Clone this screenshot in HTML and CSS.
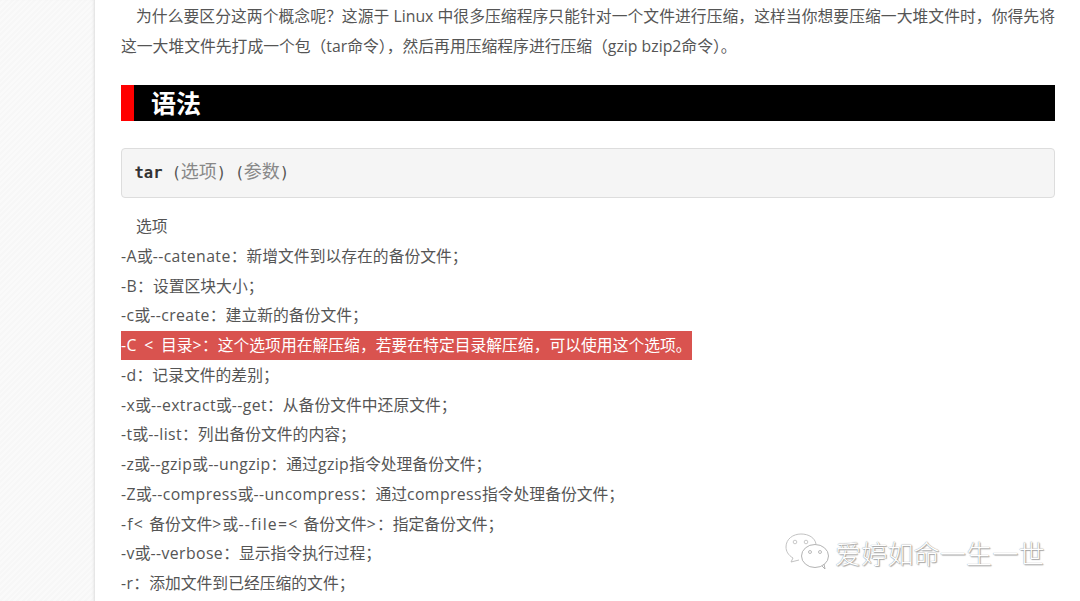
FILE: index.html
```html
<!DOCTYPE html>
<html lang="zh-CN">
<head>
<meta charset="utf-8">
<title>tar</title>
<link rel="stylesheet" href="styles.css">
</head>
<body>
<div class="page">
  <aside class="gutter"></aside>
  <main class="article">
    <p class="intro">为什么要区分这两个概念呢？这源于 Linux 中很多压缩程序只能针对一个文件进行压缩，这样当你想要压缩一大堆文件时，你得先将这一大堆文件先打成一个包（tar命令），然后再用压缩程序进行压缩（gzip bzip2命令）。</p>
    <h2 class="heading">语法</h2>
    <pre class="code"><b>tar</b> <span class="dim-p">(</span><span class="dim">选项</span><span class="dim-p">)</span> <span class="dim-p">(</span><span class="dim">参数</span><span class="dim-p">)</span></pre>
    <div class="options">
      <div class="opt-title">选项</div>
      <div><span class="en">-A</span>或<span class="en">--catenate</span>：新增文件到以存在的备份文件；</div>
      <div><span class="en">-B</span>：设置区块大小；</div>
      <div><span class="en">-c</span>或<span class="en">--create</span>：建立新的备份文件；</div>
      <div><span class="mark wide"><span class="en">-C &lt;</span> 目录<span class="en">&gt;</span>：这个选项用在解压缩，若要在特定目录解压缩，可以使用这个选项。</span></div>
      <div><span class="en">-d</span>：记录文件的差别；</div>
      <div><span class="en">-x</span>或<span class="en">--extract</span>或<span class="en">--get</span>：从备份文件中还原文件；</div>
      <div><span class="en">-t</span>或<span class="en">--list</span>：列出备份文件的内容；</div>
      <div><span class="en">-z</span>或<span class="en">--gzip</span>或<span class="en">--ungzip</span>：通过<span class="en">gzip</span>指令处理备份文件；</div>
      <div><span class="en">-Z</span>或<span class="en">--compress</span>或<span class="en">--uncompress</span>：通过<span class="en">compress</span>指令处理备份文件；</div>
      <div class="file-row"><span class="en">-f&lt;</span> 备份文件<span class="en">&gt;</span>或<span class="en">--file=&lt;</span> 备份文件<span class="en">&gt;</span>：指定备份文件；</div>
      <div><span class="en">-v</span>或<span class="en">--verbose</span>：显示指令执行过程；</div>
      <div><span class="en">-r</span>：添加文件到已经压缩的文件；</div>
    </div>
  </main>
</div>
<div class="watermark">
  <svg class="wm-icon" width="44" height="38" viewBox="0 0 44 38" fill="none">
    <path d="M8 25 C3 22 1 18 1 14 C1 6 8 1 16 1 C24 1 30 5 31 11" stroke="#bbb" stroke-width="0.9"/>
    <path d="M8 25 L6 29 L14 27" stroke="#bbb" stroke-width="0.9"/>
    <ellipse cx="30" cy="23" rx="13.5" ry="11.5" fill="#fff" stroke="#aaa" stroke-width="0.9"/>
    <path d="M37 33 L40 36 L39 31" stroke="#aaa" stroke-width="0.9"/>
    <circle cx="10" cy="9" r="1.8" stroke="#bbb" stroke-width="0.8"/>
    <circle cx="21" cy="9" r="1.8" stroke="#bbb" stroke-width="0.8"/>
    <circle cx="25" cy="19" r="1.5" stroke="#aaa" stroke-width="0.8"/>
    <circle cx="35" cy="19" r="1.5" stroke="#aaa" stroke-width="0.8"/>
  </svg>
  <span class="wm-text">爱婷如命一生一世</span>
</div>
</body>
</html>
```
FILE: styles.css
```css
* { box-sizing: border-box; }
html, body { margin: 0; padding: 0; height: 601px; overflow: hidden; background: #fff; }
body {
  font-family: "Open Sans", "Noto Sans CJK SC", sans-serif;
  font-size: 15.8px;
  color: #555;
}
.page { display: flex; height: 601px; }
.gutter {
  width: 95px;
  flex: none;
  background: repeating-linear-gradient(135deg, #f7f7f7 0 2px, #fafafa 2px 4px);
  box-shadow: inset -3px 0 3px -2px #ddd;
}
.article { flex: 1; padding: 1px 25px 0 26px; min-width: 0; }
.intro {
  margin: 0;
  text-indent: 15px;
  line-height: 30px;
  text-align: justify;
}
.heading {
  margin: 24px 0 0;
  height: 36px;
  line-height: 37px;
  background: #000;
  border-left: 13px solid #f00;
  padding-left: 17px;
  color: #fff;
  font-size: 25px;
  font-weight: 700;
}
.code {
  margin: 27px 0 0;
  height: 50px;
  padding: 0 12.5px;
  line-height: 46px;
  background: #f5f5f5;
  border: 1px solid #ddd;
  border-radius: 4px;
  font-family: "DejaVu Sans Mono", "Noto Sans CJK SC", monospace;
  font-size: 15.5px;
  color: #444;
}
.code b { color: #333; }
.dim { color: #888; font-size: 18px; }
.dim-p { color: #555; letter-spacing: -0.5px; }
.options { margin-top: 14px; line-height: 29.75px; }
.opt-title { padding-left: 15px; }
.en { letter-spacing: 0.4px; }
.wide { word-spacing: 3px; }
.file-row { word-spacing: 1px; }
.file-row .en { letter-spacing: 1.2px; }
.mark { display: inline-block; background: #d9534f; color: #fff; line-height: 29px; vertical-align: top; }
.watermark {
  position: absolute;
  left: 785px;
  top: 533px;
  display: flex;
  align-items: center;
  gap: 6px;
}
.wm-text {
  font-family: "Noto Sans CJK SC", sans-serif;
  font-size: 26px;
  font-weight: 300;
  color: #fff;
  letter-spacing: 0.2px;
  text-shadow: 0 0 1px #777, 1px 1px 1px #aaa;
}
```
